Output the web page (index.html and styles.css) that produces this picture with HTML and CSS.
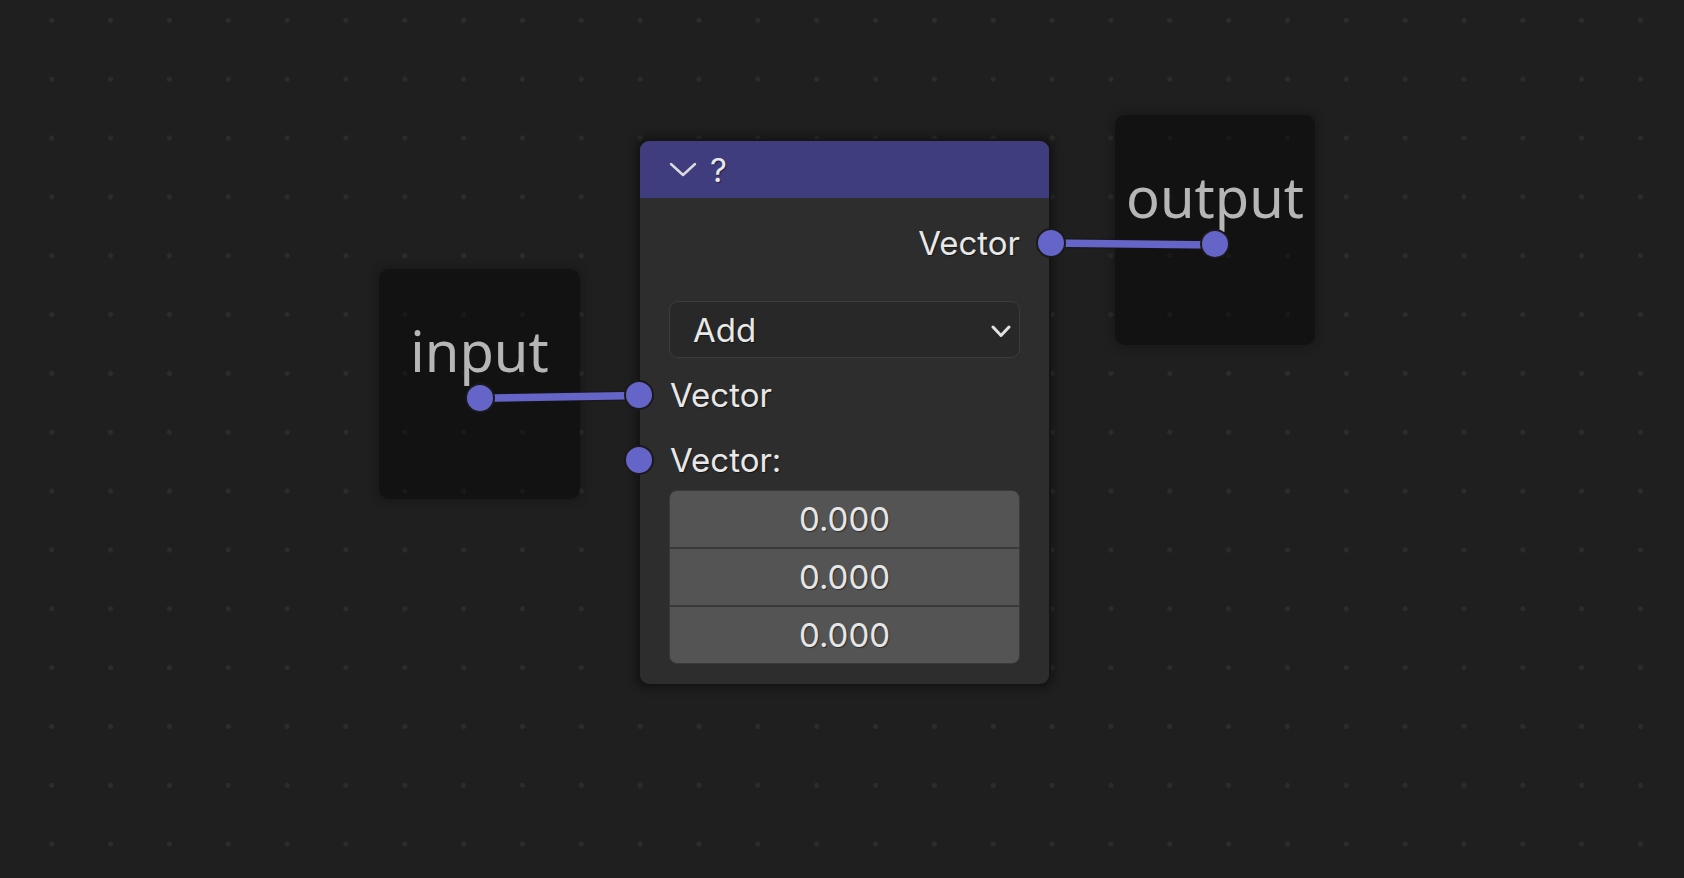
FILE: index.html
```html
<!DOCTYPE html>
<html>
<head>
<meta charset="utf-8">
<link rel="stylesheet" href="styles.css">
</head>
<body>
<div class="canvas">
  <div class="mini-node node-input">
    <div class="mini-label">input</div>
    <span class="handle mini-handle"></span>
  </div>
  <div class="mini-node node-output">
    <div class="mini-label">output</div>
    <span class="handle mini-handle"></span>
  </div>

  <div class="node">
    <div class="node-header">
      <svg class="hdr-chevron" width="28" height="16" viewBox="0 0 28 16"><path d="M2 2 L14 13 L26 2" fill="none" stroke="#dcdcdc" stroke-width="2.4" stroke-linecap="round" stroke-linejoin="round"/></svg>
      <span class="node-title">?</span>
    </div>
    <div class="node-body">
      <div class="row row-out">
        <span class="label">Vector</span>
        <span class="handle handle-right"></span>
      </div>
      <div class="select">
        <span class="label">Add</span>
        <svg class="sel-chevron" width="20" height="13" viewBox="0 0 20 13"><path d="M2 2 L10 10.5 L18 2" fill="none" stroke="#e2e2e2" stroke-width="3" stroke-linecap="round" stroke-linejoin="round"/></svg>
      </div>
      <div class="row row-in1">
        <span class="handle handle-left"></span>
        <span class="label">Vector</span>
      </div>
      <div class="row row-in2">
        <span class="handle handle-left"></span>
        <span class="label">Vector:</span>
      </div>
      <div class="vec-field">
        <div class="vec-cell">0.000</div>
        <div class="vec-cell">0.000</div>
        <div class="vec-cell">0.000</div>
      </div>
    </div>
  </div>

  <svg class="edges" width="1684" height="878" viewBox="0 0 1684 878">
    <line x1="480" y1="398.3" x2="639" y2="395.5" stroke="#161616" stroke-opacity="0.6" stroke-width="10"/>
    <line x1="480" y1="398.3" x2="639" y2="395.5" stroke="#6565c9" stroke-width="7.5"/>
    <line x1="1050" y1="243" x2="1215" y2="245" stroke="#161616" stroke-opacity="0.6" stroke-width="10"/>
    <line x1="1050" y1="243" x2="1215" y2="245" stroke="#6565c9" stroke-width="7.5"/>
  </svg>
</div>
</body>
</html>
```

FILE: styles.css
```css
html, body {
  margin: 0;
  padding: 0;
  background: #1f1f1f;
  overflow: hidden;
}

.canvas {
  position: relative;
  width: 1684px;
  height: 878px;
  background-color: #1f1f1f;
  background-image: radial-gradient(circle at center, #2c2c2c 0, #2c2c2c 2.2px, rgba(44,44,44,0) 2.8px);
  background-size: 58.85px 58.85px;
  background-position: 22.3px -9.1px;
  font-family: "Inter", "Noto Sans", sans-serif;
}

.edges {
  position: absolute;
  left: 0;
  top: 0;
  z-index: 2;
  pointer-events: none;
}

.handle {
  position: absolute;
  z-index: 3;
  width: 26px;
  height: 26px;
  border-radius: 50%;
  background: #6565c9;
  border: 2.2px solid #1a1a1a;
  box-sizing: content-box;
}

/* small nodes */
.mini-node {
  position: absolute;
  width: 201px;
  height: 230px;
  border-radius: 10px;
  background: rgba(0, 0, 0, 0.42);
  box-shadow: 0 0 10px 2px rgba(0, 0, 0, 0.25);
}
.node-input { left: 379px; top: 269px; }
.node-output { left: 1115px; top: 115px; width: 200px; }

.mini-label {
  padding-top: 46px;
  text-align: center;
  font-family: "Noto Sans", sans-serif;
  font-size: 56px;
  line-height: 70px;
  color: #b6b6b6;
}

.mini-handle {
  left: 50%;
  top: 129px;
  transform: translate(-50%, -50%);
}

/* main node */
.node {
  position: absolute;
  left: 638px;
  top: 139px;
  width: 409px;
  border: 2px solid #151515;
  border-radius: 11px;
  background: #2d2d2d;
  box-shadow: 0 0 8px 3px rgba(0, 0, 0, 0.35);
}

.node-header {
  height: 57px;
  background: #3f3d7e;
  border-radius: 9px 9px 0 0;
  display: flex;
  align-items: center;
  gap: 13px;
  padding-left: 29px;
}

.node-title {
  font-size: 33px;
  line-height: 40px;
  color: #e8e8e8;
  text-shadow: 1px 1px 1px rgba(0, 0, 0, 0.5);
}

.node-body {
  display: flex;
  flex-direction: column;
  padding: 0 29px 20px 29px;
}

.label {
  font-size: 33px;
  line-height: 40px;
  color: #e8e8e8;
  text-shadow: 1px 1px 1px rgba(0, 0, 0, 0.5);
}

.row {
  position: relative;
  height: 40px;
  display: flex;
  align-items: center;
}
.row-out { justify-content: flex-end; margin-top: 25px; }
.row-in1 { margin-top: 17px; padding-left: 1px; }
.row-in2 { margin-top: 25px; padding-left: 1px; }

.handle-right {
  top: 50%;
  transform: translate(50%, -50%);
}
.handle-left {
  left: -30px;
  top: 50%;
  transform: translate(-50%, -50%);
}
.row-out .handle-right { right: -31px; }

.select {
  margin-top: 38px;
  height: 55px;
  border: 1.5px solid #3c3c3c;
  border-radius: 9px;
  background: #282828;
  display: flex;
  align-items: center;
  justify-content: space-between;
  padding: 0 8px 0 23px;
}
.sel-chevron { margin-top: 3px; }

.vec-field {
  margin-top: 10px;
  border: 1px solid #393939;
  border-radius: 8px;
  background: #393939;
  display: flex;
  flex-direction: column;
  gap: 2px;
  overflow: hidden;
}
.vec-cell {
  height: 56px;
  background: #545454;
  display: flex;
  align-items: center;
  justify-content: center;
  font-size: 33px;
  color: #e6e6e6;
  text-shadow: 1px 1px 1px rgba(0, 0, 0, 0.45);
}
```
